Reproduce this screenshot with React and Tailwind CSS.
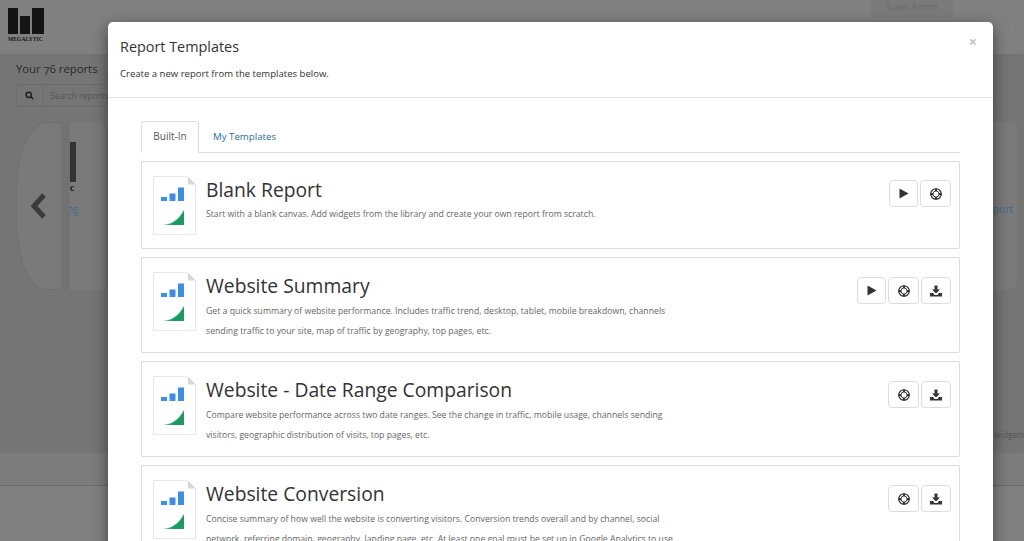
import { useId } from 'react';

const templates = [
  {
    title: 'Blank Report',
    lines: ['Start with a blank canvas. Add widgets from the library and create your own report from scratch.'],
    actions: ['play', 'help'],
    height: 'h-[88px]',
    nudge: '',
  },
  {
    title: 'Website Summary',
    lines: [
      'Get a quick summary of website performance. Includes traffic trend, desktop, tablet, mobile breakdown, channels',
      'sending traffic to your site, map of traffic by geography, top pages, etc.',
    ],
    actions: ['play', 'help', 'download'],
    height: 'h-[96px]',
    nudge: 'mt-px',
  },
  {
    title: 'Website - Date Range Comparison',
    lines: [
      'Compare website performance across two date ranges. See the change in traffic, mobile usage, channels sending',
      'visitors, geographic distribution of visits, top pages, etc.',
    ],
    actions: ['help', 'download'],
    height: 'h-[96px]',
    nudge: 'mt-px',
  },
  {
    title: 'Website Conversion',
    lines: [
      'Concise summary of how well the website is converting visitors. Conversion trends overall and by channel, social',
      'network, referring domain, geography, landing page, etc. At least one goal must be set up in Google Analytics to use',
    ],
    actions: ['help', 'download'],
    height: 'h-[96px]',
    nudge: 'mt-px',
  },
];

const widths = { play: 'w-[29px]', help: 'w-[31px]', download: 'w-[30px]' };

function DocIcon() {
  const id = useId();
  return (
    <svg width="43" height="59" viewBox="0 0 43 59" className="shrink-0 mt-px">
      <defs>
        <linearGradient id={id} x1="0" y1="0" x2="1" y2="0">
          <stop offset="0" stopColor="#5fbf93" />
          <stop offset="0.6" stopColor="#1b9a63" />
        </linearGradient>
      </defs>
      <path d="M0.5 0.5H34L42.5 9V58.5H0.5Z" fill="#fff" stroke="#e8e8e8" />
      <path d="M35 0.5L42.5 8.5H35Z" fill="#d5d8dc" />
      <rect x="8" y="21" width="6" height="4" fill="#3b8de8" />
      <rect x="16.5" y="17.5" width="6" height="7.5" fill="#3b8de8" />
      <rect x="25" y="11.5" width="6" height="13.5" fill="#3b8de8" />
      <path d="M8 49C18 49 26 44 31 34V49Z" fill={`url(#${id})`} />
    </svg>
  );
}

function RingIcon() {
  return (
    <svg width="12" height="12" viewBox="0 0 24 24" fill="none" stroke="#333">
      <circle cx="12" cy="12" r="10.5" strokeWidth="2.4" />
      <circle cx="12" cy="12" r="6" strokeWidth="1.8" />
      <path d="M12 1v5M12 18v5M1 12h5M18 12h5" strokeWidth="4.5" />
    </svg>
  );
}

function SaveIcon() {
  return (
    <svg width="12" height="12" viewBox="0 0 24 24" fill="#333">
      <path d="M9 1h6v8h5l-8 8-8-8h5Z" />
      <path d="M0 16h6l3 4h6l3-4h6v7H0Z" />
    </svg>
  );
}

function PlayIcon() {
  return (
    <svg width="10" height="11" viewBox="0 0 10 11" fill="#333">
      <path d="M0.5 0.5L9.5 5.5L0.5 10.5Z" />
    </svg>
  );
}

function ActionButton({ type }) {
  return (
    <button className={`h-[27px] flex items-center justify-center bg-white border border-[#ddd] rounded-[4px] ${widths[type]}`}>
      {type === 'play' && <PlayIcon />}
      {type === 'help' && <RingIcon />}
      {type === 'download' && <SaveIcon />}
    </button>
  );
}

function TemplateCard({ template }) {
  return (
    <div className={`${template.height} shrink-0 border border-[#ddd] rounded-[2px] bg-white flex pl-[11px] pr-2 pt-[13px]`}>
      <DocIcon />
      <div className="ml-[10px] flex-1">
        <div className="text-[19.3px] leading-[29px] text-[#333]">{template.title}</div>
        <div className={`w-[480px] ${template.nudge}`}>
          {template.lines.map(line => (
            <div key={line} className="text-[8.7px] leading-[20px] text-[#666] whitespace-nowrap">{line}</div>
          ))}
        </div>
      </div>
      <div className={`flex gap-[2px] pt-[5px] h-fit ${template.nudge}`}>
        {template.actions.map(a => <ActionButton key={a} type={a} />)}
      </div>
    </div>
  );
}

function Background() {
  return (
    <div className="h-full bg-[#757575] flex flex-col">
      <div className="h-[55px] shrink-0 bg-[#808080] border-b border-[#737373] flex justify-between pl-2 pr-[71px]">
        <div className="pt-2 w-[40px]">
          <div className="flex items-end gap-[2px] h-[26px]">
            <div className="w-[10px] h-[26px] bg-[#141414]" />
            <div className="w-[10px] h-[18px] bg-[#141414]" />
            <div className="w-[12px] h-[26px] bg-[#141414]" />
          </div>
          <div className="text-[5.5px] leading-[8px] mt-[1px] tracking-[0.1px] font-bold text-[#141414] whitespace-nowrap font-['Liberation_Serif',serif]">MEGALYTIC</div>
        </div>
        <div className="w-[82px] h-[18px] bg-[#7a7a7a] rounded-b text-center text-[8.5px] leading-[14px] text-[#6a6a6a]">Super Admin</div>
      </div>
      <div className="flex-1 px-4 pt-[5px] relative">
        <div className="text-[11.3px] leading-[18px] text-[#2a2a2a] oldstyle-nums">Your 76 reports</div>
        <div className="mt-[6px] h-[23px] w-[100px] flex border border-[#6c6c6c] rounded-[2px]">
          <div className="w-[26px] flex items-center justify-center border-r border-[#6c6c6c]">
            <svg width="9" height="9" viewBox="0 0 24 24" fill="none" stroke="#222" strokeWidth="4">
              <circle cx="10" cy="10" r="7" />
              <path d="M15 15l7 7" />
            </svg>
          </div>
          <div className="pl-[7px] text-[8.5px] leading-[21px] text-[#555] whitespace-nowrap">Search reports</div>
        </div>
        <div className="mt-[15px] flex">
          <div className="w-[46px] h-[168px] border border-[#707070] rounded-[30px_4px_4px_30px/70px_4px_4px_70px] bg-[#7a7a7a] flex items-center justify-center pr-[3px]">
            <svg width="18" height="26" viewBox="0 0 18 26" fill="none" stroke="#3a3a3a" strokeWidth="5">
              <path d="M15 2L5 13l10 11" />
            </svg>
          </div>
          <div className="w-[8px] h-[168px] bg-[#727272]" />
          <div className="w-[36px] h-[168px] bg-[#7a7a7a] rounded-r-lg pt-5 overflow-hidden">
            <div className="w-[6px] h-[40px] bg-[#333]" />
            <div className="text-[10px] leading-[14px] -mt-px font-bold text-[#1a1a1a] font-['Liberation_Serif',serif]">c</div>
            <div className="text-[10px] leading-[14px] mt-[7px] -ml-[3px] text-[#3f6a8e]">ng</div>
          </div>
        </div>
      </div>
      <div className="h-[33px] shrink-0 bg-[#7c7c7c] border-b border-[#6a6a6a]" />
      <div className="h-[55px] shrink-0 bg-[#808080]" />
    </div>
  );
}

export default function App() {
  return (
    <div className="relative h-[541px] w-[1024px] overflow-hidden font-['Open_Sans',sans-serif]">
      <Background />
      {/* right peek of the report behind the modal */}
      <div className="absolute left-[993px] top-[122px] w-[24px] h-[168px] bg-[#7a7a7a] rounded-r-lg">
        <div className="absolute top-[80px] left-0 text-[10px] leading-[14px] text-[#3f6a8e]">port</div>
      </div>
      <div className="absolute left-[994px] top-[428px] text-[8.5px] leading-[14px] text-[#555] whitespace-nowrap">widgets</div>

      <div className="absolute left-[108px] top-[22px] w-[885px] h-[560px] bg-white rounded-[5px] shadow-[0_5px_15px_rgba(0,0,0,0.5)]">
        <div className="h-[76px] border-b border-[#e5e5e5] pl-3 pt-[15px] relative">
          <div className="text-[14.4px] leading-[20px] text-[#333]">Report Templates</div>
          <div className="mt-[10px] text-[9.55px] leading-[14px] text-[#333]">Create a new report from the templates below.</div>
          <div className="absolute right-[16px] top-[11px] text-[15px] leading-[16px] font-bold text-[#c4c4c4]">×</div>
        </div>
        <div className="px-[33px] pt-[23px]">
          <div className="flex h-[32px] border-b border-[#ddd] w-[819px]">
            <div className="w-[58px] h-[32px] bg-white border border-[#ddd] border-b-white rounded-t-[3px] text-center text-[10px] leading-[29px] text-[#555]">Built-In</div>
            <div className="ml-[14px] text-[9.7px] leading-[31px] text-[#2a6f9e]">My Templates</div>
          </div>
          <div className="mt-[8px] w-[819px] flex flex-col gap-[8px]">
            {templates.map(t => <TemplateCard key={t.title} template={t} />)}
          </div>
        </div>
      </div>
    </div>
  );
}
